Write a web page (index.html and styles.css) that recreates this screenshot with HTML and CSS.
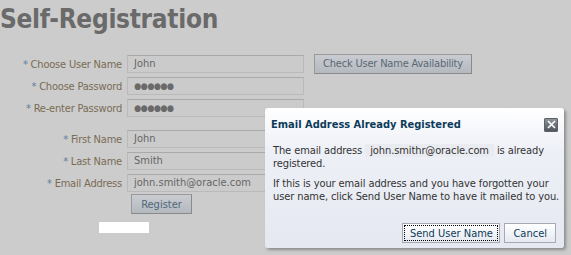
FILE: index.html
```html
<!DOCTYPE html>
<html lang="en">
<head>
  <meta charset="UTF-8">
  <title>Self-Registration</title>
  <link rel="stylesheet" href="styles.css">
</head>
<body>

  <div id="page">
    <h1>Self-Registration</h1>

    <div class="form">
      <div class="row">
        <label><span class="req">*</span> Choose User Name</label>
        <div class="field">John</div>
        <button class="btn check">Check User Name Availability</button>
      </div>
      <div class="row">
        <label><span class="req">*</span> Choose Password</label>
        <div class="field dots">&#9679;&#9679;&#9679;&#9679;&#9679;&#9679;</div>
      </div>
      <div class="row">
        <label><span class="req">*</span> Re-enter Password</label>
        <div class="field dots">&#9679;&#9679;&#9679;&#9679;&#9679;&#9679;</div>
      </div>

      <div class="row first">
        <label><span class="req">*</span> First Name</label>
        <div class="field">John</div>
      </div>
      <div class="row">
        <label><span class="req">*</span> Last Name</label>
        <div class="field">Smith</div>
      </div>
      <div class="row">
        <label><span class="req">*</span> Email Address</label>
        <div class="field">john.smith@oracle.com</div>
      </div>
      <div class="row actions">
        <button class="btn register">Register</button>
      </div>
    </div>

    <div class="blank"></div>
  </div>

  <div id="dialog">
    <div class="dlg-head">
      <span class="dlg-title">Email Address Already Registered</span>
      <button class="dlg-close">
        <svg width="9" height="9" viewBox="0 0 9 9"><path d="M1 1 L8 8 M8 1 L1 8" stroke="#fff" stroke-width="1.6"/></svg>
      </button>
    </div>
    <div class="dlg-body">
      <p>The email address <span class="mail">john.smithr@oracle.com</span> is already registered.</p>
      <p>If this is your email address and you have forgotten your user name, click Send User Name to have it mailed to you.</p>
    </div>
    <div class="dlg-foot">
      <button class="btn dbtn focus">Send User Name</button>
      <button class="btn dbtn">Cancel</button>
    </div>
  </div>

</body>
</html>
```

FILE: styles.css
```css
body {
  margin: 0;
  background-color: #cccccc;
  font-family: "DejaVu Sans Condensed", "DejaVu Sans", sans-serif;
  font-size: 11px;
  width: 571px;
  height: 255px;
  overflow: hidden;
}

#page {
  padding: 0;
}

h1 {
  margin: 0;
  padding: 4px 0 0 0;
  height: 47px;
  box-sizing: border-box;
  font-size: 26px;
  font-weight: bold;
  color: #6a6a6a;
  letter-spacing: -0.3px;
}

.form {
  padding-top: 8px;
}

.row {
  display: flex;
  align-items: center;
  height: 18px;
  margin-bottom: 4px;
}

.row.first {
  margin-top: 13px;
}

.row label {
  width: 122px;
  text-align: right;
  color: #7a6b55;
  padding-right: 5px;
  white-space: nowrap;
  letter-spacing: -0.2px;
}

.req {
  color: #5f7e9c;
}

.field {
  width: 169px;
  height: 16px;
  line-height: 16px;
  padding-left: 6px;
  border: 1px solid #bababa;
  border-top-color: #a9a9a9;
  background-color: #cbcbcb;
  color: #666666;
  white-space: nowrap;
  overflow: hidden;
}

.field.dots {
  font-size: 9px;
  letter-spacing: -0.5px;
  color: #6a6a6a;
}

.btn {
  font-family: "DejaVu Sans Condensed", "DejaVu Sans", sans-serif;
  font-size: 11px;
  margin: 0;
  padding: 0 8px;
  height: 20px;
  border: 1px solid #999;
  border-right-color: #8a8a8a;
  border-bottom-color: #8a8a8a;
  background: linear-gradient(#c9ccd1, #b4b9c0);
  color: #5a6873;
  white-space: nowrap;
  cursor: pointer;
}

.check {
  margin-left: 10px;
  width: 158px;
  padding: 0;
  margin-top: -1px;
  letter-spacing: -0.2px;
}

.actions {
  height: 20px;
  margin-top: -2px;
}

.register {
  margin-left: 131px;
  width: 61px;
  padding: 0;
  color: #4f6877;
}

.blank {
  width: 50px;
  height: 11px;
  background-color: #ffffff;
  margin: 8px 0 0 99px;
}

#dialog {
  position: absolute;
  left: 265px;
  top: 108px;
  width: 299px;
  height: 140px;
  box-sizing: border-box;
  border-radius: 3px;
  background: linear-gradient(#ffffff, #eef0f7 30%, #e5e8f1);
  box-shadow: 2px 2px 3px rgba(80, 80, 80, 0.5);
  display: flex;
  flex-direction: column;
}

.dlg-head {
  display: flex;
  align-items: center;
  justify-content: space-between;
  padding: 6px 6px 0 6px;
  height: 21px;
}

.dlg-title {
  font-weight: bold;
  color: #0c3b5a;
}

.dlg-close {
  width: 14px;
  height: 14px;
  padding: 0;
  border: 1px solid #5c6168;
  border-radius: 1px;
  background: linear-gradient(#8d939b, #50565d);
  display: flex;
  align-items: center;
  justify-content: center;
}

.dlg-body {
  padding: 9px 0 0 8px;
  color: #333333;
  line-height: 13px;
  letter-spacing: -0.1px;
  flex: 1;
}

.dlg-body p {
  margin: 0 0 7px 0;
}

.mail {
  display: inline-block;
  background-color: #e9ebf1;
  padding: 0 5px;
}

.dlg-foot {
  display: flex;
  justify-content: flex-end;
  gap: 4px;
  padding: 0 8px 5px 0;
}

.dbtn {
  background: linear-gradient(#ffffff, #e6e9f0);
  border: 1px solid #a4a9b3;
  color: #0c3b5a;
  padding: 0 8px;
}

.dbtn.focus {
  width: 98px;
  padding: 0;
  outline: 1px dotted #000;
  outline-offset: -3px;
}
```
